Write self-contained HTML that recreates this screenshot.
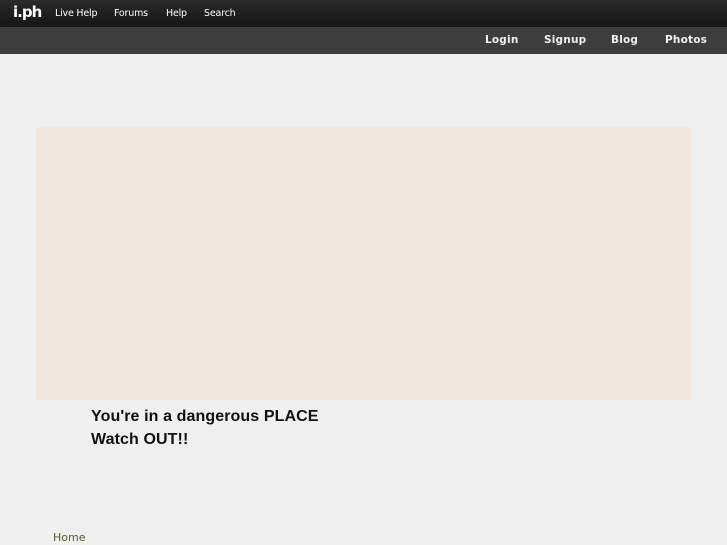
<!DOCTYPE html>
<html><head><style>
body{margin:0;width:727px;height:545px;background:#efefef;font-family:"DejaVu Sans","Liberation Sans",sans-serif;position:relative;overflow:hidden}
.top{position:absolute;left:0;top:0;width:727px;height:27px;background:linear-gradient(#2a2a2a,#151515)}
.top span{position:absolute;top:8px;color:#fff;font-size:9.5px;letter-spacing:-0.2px}
.bar{position:absolute;left:0;top:27px;width:727px;height:27px;background:#3d3d3d}
.bar span{position:absolute;top:7px;color:#f0f0f0;font-size:10.5px;font-weight:bold;letter-spacing:0.2px}
.box{position:absolute;left:36px;top:127px;width:655px;height:273px;background:#f1e8dd}
.msg{position:absolute;left:91px;top:405px;font-family:"Liberation Sans",sans-serif;font-weight:bold;font-size:16px;line-height:23px;color:#111;letter-spacing:0.1px}
.home{position:absolute;left:53px;top:531px;font-size:11px;color:#5a5a2a}
</style></head><body>
<div class="top">
<span style="left:13px;top:3px;font-size:15px;font-weight:bold;letter-spacing:-1px">i.ph</span>
<span style="left:55px">Live Help</span>
<span style="left:114px">Forums</span>
<span style="left:166px">Help</span>
<span style="left:204px">Search</span>
</div>
<div class="bar">
<span style="left:485px">Login</span>
<span style="left:544px">Signup</span>
<span style="left:611px">Blog</span>
<span style="left:665px">Photos</span>
</div>
<div class="box"></div>
<div class="msg">You're in a dangerous PLACE<br>Watch OUT!!</div>
<div class="home">Home</div>
</body></html>
